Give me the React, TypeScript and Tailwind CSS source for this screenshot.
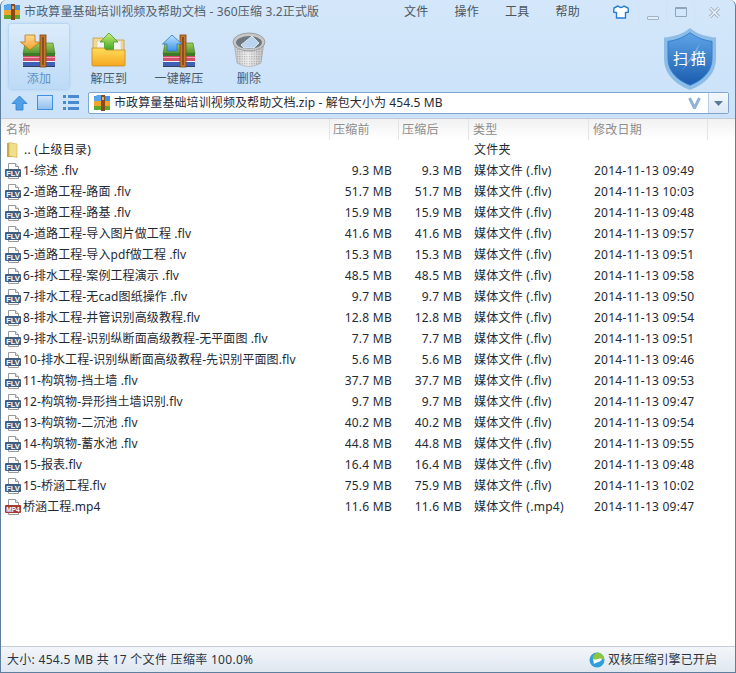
import React from "react";

const FONT = { fontFamily: '"Noto Sans","Noto Sans CJK SC",sans-serif' };

const rows: [string, string, string, string, string?][] = [
  ["1-综述 .flv", "9.3 MB", "媒体文件 (.flv)", "2014-11-13 09:49"],
  ["2-道路工程-路面 .flv", "51.7 MB", "媒体文件 (.flv)", "2014-11-13 10:03"],
  ["3-道路工程-路基 .flv", "15.9 MB", "媒体文件 (.flv)", "2014-11-13 09:48"],
  ["4-道路工程-导入图片做工程 .flv", "41.6 MB", "媒体文件 (.flv)", "2014-11-13 09:57"],
  ["5-道路工程-导入pdf做工程 .flv", "15.3 MB", "媒体文件 (.flv)", "2014-11-13 09:51"],
  ["6-排水工程-案例工程演示 .flv", "48.5 MB", "媒体文件 (.flv)", "2014-11-13 09:58"],
  ["7-排水工程-无cad图纸操作 .flv", "9.7 MB", "媒体文件 (.flv)", "2014-11-13 09:50"],
  ["8-排水工程-井管识别高级教程.flv", "12.8 MB", "媒体文件 (.flv)", "2014-11-13 09:54"],
  ["9-排水工程-识别纵断面高级教程-无平面图 .flv", "7.7 MB", "媒体文件 (.flv)", "2014-11-13 09:51"],
  ["10-排水工程-识别纵断面高级教程-先识别平面图.flv", "5.6 MB", "媒体文件 (.flv)", "2014-11-13 09:46"],
  ["11-构筑物-挡土墙 .flv", "37.7 MB", "媒体文件 (.flv)", "2014-11-13 09:53"],
  ["12-构筑物-异形挡土墙识别.flv", "9.7 MB", "媒体文件 (.flv)", "2014-11-13 09:47"],
  ["13-构筑物-二沉池 .flv", "40.2 MB", "媒体文件 (.flv)", "2014-11-13 09:54"],
  ["14-构筑物-蓄水池 .flv", "44.8 MB", "媒体文件 (.flv)", "2014-11-13 09:55"],
  ["15-报表.flv", "16.4 MB", "媒体文件 (.flv)", "2014-11-13 09:48"],
  ["15-桥涵工程.flv", "75.9 MB", "媒体文件 (.flv)", "2014-11-13 10:02"],
  ["桥涵工程.mp4", "11.6 MB", "媒体文件 (.mp4)", "2014-11-13 09:47", "mp4"],
];

function Books({ arrow, id }: { arrow: "down" | "up"; id: string }) {
  return (
    <svg width="38" height="36" viewBox="0 0 38 36" className="block">
      <defs>
        <linearGradient id={id + "g"} x1="0" y1="0" x2="0" y2="1">
          <stop offset="0" stopColor="#9ccf5c" />
          <stop offset="1" stopColor="#4f8f2c" />
        </linearGradient>
        <linearGradient id={id + "a"} x1="0" y1="0" x2="0" y2="1">
          <stop offset="0" stopColor={arrow === "down" ? "#ffd98a" : "#bfe3ff"} />
          <stop offset="1" stopColor={arrow === "down" ? "#f0a030" : "#3f95e8"} />
        </linearGradient>
      </defs>
      <path d="M5 11 H33 L35 22 H3 Z" fill={`url(#${id}g)`} stroke="#3f6f24" strokeWidth="0.6" />
      <rect x="3" y="21" width="32" height="3" fill="#3d7a28" />
      <rect x="3" y="24" width="32" height="5" fill="#d0506c" />
      <rect x="3" y="25" width="32" height="1" fill="#ee9fb0" />
      <rect x="3" y="29" width="32" height="1" fill="#f0f0f5" />
      <rect x="3" y="30" width="32" height="4" fill="#4060b8" />
      <rect x="3" y="34" width="32" height="1" fill="#33415e" />
      <rect x="20" y="3" width="6" height="32" fill="#c7772a" stroke="#7c4416" strokeWidth="0.8" />
      <rect x="22" y="5" width="2" height="28" fill="#8b4f1c" />
      {arrow === "down" ? (
        <path d="M5 3 H15 V10 H20 L10 18 L0.5 10 H5 Z" fill={`url(#${id}a)`} stroke="#b8741e" strokeWidth="0.8" />
      ) : (
        <path d="M5 18 H15 V11 H20 L10 2 L0.5 11 H5 Z" transform="translate(2 1)" fill={`url(#${id}a)`} stroke="#2f78c0" strokeWidth="0.8" />
      )}
    </svg>
  );
}

function FolderIcon() {
  return (
    <svg width="36" height="36" viewBox="0 0 36 36" className="block">
      <defs>
        <linearGradient id="fo" x1="0" y1="0" x2="0" y2="1">
          <stop offset="0" stopColor="#ffdc5c" />
          <stop offset="1" stopColor="#f5a81e" />
        </linearGradient>
        <linearGradient id="ar" x1="0" y1="0" x2="0" y2="1">
          <stop offset="0" stopColor="#cdf07a" />
          <stop offset="1" stopColor="#3ea61e" />
        </linearGradient>
      </defs>
      <path d="M2 6 H12 L14 8 H33 V20 H2 Z" fill="#f6d88a" stroke="#c79a42" strokeWidth="0.8" />
      <rect x="6" y="9" width="24" height="12" fill="#f2f2f0" stroke="#c8c8c8" strokeWidth="0.5" />
      <path d="M18 1 L27 10 H22.5 V18 H13.5 V10 H9 Z" fill="url(#ar)" stroke="#4a9a28" strokeWidth="0.8" />
      <path d="M1 16 H13 L15 18 H34 V33 Q34 34 33 34 H2 Q1 34 1 33 Z" fill="url(#fo)" stroke="#c08a26" strokeWidth="0.8" />
    </svg>
  );
}

function TrashIcon() {
  return (
    <svg width="34" height="36" viewBox="0 0 34 36" className="block">
      <defs>
        <linearGradient id="tr" x1="0" y1="0" x2="1" y2="0">
          <stop offset="0" stopColor="#9c9c9c" />
          <stop offset="0.45" stopColor="#f4f4f4" />
          <stop offset="1" stopColor="#8c8c8c" />
        </linearGradient>
        <pattern id="mesh" width="2.4" height="2.4" patternUnits="userSpaceOnUse">
          <rect width="2.4" height="2.4" fill="#f0f0f0" />
          <rect width="1.2" height="1.2" fill="#8a8a8a" />
        </pattern>
      </defs>
      <path d="M2 10 L5 31 Q17 38 29 31 L32 10 Z" fill="url(#mesh)" stroke="#a0a0a0" strokeWidth="0.6" />
      <path d="M2 10 L5 31 Q17 38 29 31 L32 10 Z" fill="url(#tr)" opacity="0.45" />
      <ellipse cx="17" cy="10" rx="16" ry="9" fill="#c8c8c8" stroke="#909090" strokeWidth="0.8" />
      <ellipse cx="17" cy="10.5" rx="13" ry="6.5" fill="#6e7a80" />
      <path d="M9 13 L20 4 L27 11 L22 16 H12 Z" fill="#b9d4ec" stroke="#eaf2fa" strokeWidth="0.8" />
    </svg>
  );
}

function ZipSmall() {
  return (
    <svg width="16" height="16" viewBox="0 0 16 16" className="block">
      <rect x="0" y="1" width="16" height="5" fill="#3f95e8" />
      <path d="M0 3 L3 0 H7 L8 2 V6 H0 Z" fill="#5aa6ee" />
      <rect x="0" y="6" width="16" height="5" fill="#f0a42a" />
      <rect x="0" y="11" width="16" height="4" fill="#5fa82e" />
      <rect x="7" y="0" width="4" height="16" fill="#8a4a1c" />
      <rect x="8" y="2" width="2" height="3" fill="#e0b060" />
    </svg>
  );
}

function FileIcon({ kind }: { kind: "flv" | "mp4" }) {
  const c = kind === "mp4" ? "#a53a30" : "#3f5f82";
  return (
    <svg width="16" height="16" viewBox="0 0 16 16" className="block">
      <path d="M3.5 0.5 H10.5 L13.5 3.5 V15.5 H3.5 Z" fill="#fff" stroke="#9a9a9a" />
      <path d="M10.5 0.5 V3.5 H13.5" fill="#e8e8e8" stroke="#9a9a9a" />
      <rect x="0" y="6" width="16" height="8" rx="1" fill={c} />
      <text
        x="8"
        y="12.7"
        textAnchor="middle"
        fontSize={kind === "mp4" ? "6.5" : "7.5"}
        fontWeight="700"
        fill="#fff"
        letterSpacing="0"
        style={{ fontFamily: '"Liberation Sans",sans-serif' }}
      >
        {kind === "mp4" ? "MP4" : "FLV"}
      </text>
    </svg>
  );
}

function ParentFolder() {
  return (
    <svg width="16" height="16" viewBox="0 0 16 16" className="block">
      <path d="M3 1 H9 V15 H3 Z" fill="#c9a93e" />
      <path d="M5 0.5 L13 2 V15.5 L5 14 Z" fill="#f2de8a" stroke="#c9ad55" strokeWidth="0.6" />
    </svg>
  );
}

function ToolButton({ label, active, children }: { label: string; active?: boolean; children: React.ReactNode }) {
  return (
    <div
      className={
        active
          ? "flex h-[65px] w-[60px] flex-col items-center rounded-[3px] bg-gradient-to-b from-[#dcecfb] to-[#bcdaf6] pt-[7px] shadow-[0_0_3px_#8fb9e0] text-[#5f93c4]"
          : "flex h-[65px] w-[60px] flex-col items-center pt-[7px] text-[#4b5a68]"
      }
    >
      <div className="flex h-[37px] items-center justify-center">{children}</div>
      <span className="mt-[3px] whitespace-nowrap text-[12px] leading-[16px]">{label}</span>
    </div>
  );
}

function Shield() {
  return (
    <svg width="54" height="63" viewBox="0 0 54 66" preserveAspectRatio="none" className="block">
      <defs>
        <linearGradient id="sh" x1="0" y1="0" x2="0" y2="1">
          <stop offset="0" stopColor="#5fa4e6" />
          <stop offset="1" stopColor="#1a5cae" />
        </linearGradient>
      </defs>
      <path d="M27 0 C35 7 44 9 53 10 V32 C53 48 42 59 27 65 C12 59 1 48 1 32 V10 C10 9 19 7 27 0 Z" fill="#8dbde6" />
      <path d="M27 5 C35 11 42 13 49 14 V32 C49 46 39 55 27 60 C15 55 5 46 5 32 V14 C12 13 19 11 27 5 Z" fill="url(#sh)" stroke="#2f7fd0" strokeWidth="1" />
      <path d="M37 16 L18 46 L27 34 L31 33 Z" fill="#8fc0ee" opacity="0.7" />
    </svg>
  );
}

export default function App() {
  return (
    <div
      style={FONT}
      className="relative flex h-[673px] w-[736px] flex-col overflow-hidden rounded-t-[6px] border-x border-b border-x-[#5f7f9f] border-b-[#5f7f9f] bg-gradient-to-b from-[#d4e7fa] via-[#b9d8f7] to-[#a6cdf3] text-[12px] tracking-[0.25px]"
    >
      {/* title bar */}
      <div className="flex h-[24px] shrink-0 items-center pl-[3px]">
        <ZipSmall />
        <span className="ml-[4px] whitespace-nowrap text-[12px] leading-[16px] tracking-[0.15px] text-[#53606c]">
          市政算量基础培训视频及帮助文档 - 360压缩 3.2正式版
        </span>
        <div className="ml-auto flex items-center self-start text-[#4a5560]">
          <div className="flex h-[24px] items-center gap-[26px]">
            <span>文件</span>
            <span>操作</span>
            <span>工具</span>
            <span>帮助</span>
          </div>
          <svg width="16" height="14" viewBox="0 0 16 14" className="ml-[33px]">
            <path d="M5 1 L1 3 L0.5 7 L3.5 7.5 V13 H12.5 V7.5 L15.5 7 L15 3 L11 1 Q8 4 5 1 Z" fill="#fff" stroke="#1f7fd8" strokeWidth="1.4" />
          </svg>
          <div className="ml-[9px] flex h-[21px] w-[29px] items-end justify-center border-x border-[#cfe2f5] pb-[3px]">
            <div className="h-[4px] w-[12px] rounded-[1px] border border-[#9fb3c6] bg-[#e4eef8]" />
          </div>
          <div className="flex h-[21px] w-[28px] items-center justify-center border-r border-[#cfe2f5]">
            <div className="h-[10px] w-[12px] rounded-[1px] border border-[#8fa5ba] border-t-[2px]" />
          </div>
          <div className="flex h-[21px] w-[40px] items-center justify-center pr-[1px]">
            <svg width="13" height="13" viewBox="0 0 13 13">
              <path d="M2 2 L11 11 M11 2 L2 11" stroke="#a4b5c5" strokeWidth="3.4" />
              <path d="M2 2 L11 11 M11 2 L2 11" stroke="#eef4fa" strokeWidth="1.4" />
            </svg>
          </div>
        </div>
      </div>

      {/* toolbar */}
      <div className="flex h-[68px] shrink-0 items-start gap-[10px] pl-[8px]">
        <ToolButton label="添加" active>
          <Books arrow="down" id="b1" />
        </ToolButton>
        <ToolButton label="解压到">
          <FolderIcon />
        </ToolButton>
        <ToolButton label="一键解压">
          <Books arrow="up" id="b2" />
        </ToolButton>
        <ToolButton label="删除">
          <TrashIcon />
        </ToolButton>
      </div>

      {/* shield */}
      <div className="absolute left-[662px] top-[28px]">
        <Shield />
        <span className="absolute left-[10px] top-[20px] whitespace-nowrap text-[15px] leading-[20px] tracking-[3px] text-white">
          扫描
        </span>
      </div>

      {/* address row */}
      <div className="flex h-[26px] shrink-0 items-start pl-[10px]">
        <svg width="17" height="16" viewBox="0 0 17 16" className="mt-[3px]">
          <path d="M8.5 1 L16 8.5 H12 V15 H5 V8.5 H1 Z" fill="#4f9fe8" stroke="#2f7fcc" strokeWidth="0.8" />
        </svg>
        <div className="ml-[9px] mt-[3px] h-[15px] w-[16px] border-[1.5px] border-[#3f8fe0] bg-gradient-to-b from-[#d2e6fa] to-[#8fbfee] p-[1px]" />
        <div className="ml-[10px] mt-[3px] flex w-[16px] flex-col gap-[3px]">
          {[0, 1, 2].map((i) => (
            <div key={i} className="flex gap-[2px]">
              <div className="h-[3px] w-[3px] bg-[#4a8ad0]" />
              <div className="h-[3px] w-[11px] bg-[#4a8ad0]" />
            </div>
          ))}
        </div>
        <div className="relative z-0 ml-[9px] flex h-[22px] w-[641px] items-center rounded-[2px] border border-[#7fa6cf] bg-white pl-[5px]">
          <ZipSmall />
          <span className="ml-[4px] whitespace-nowrap tracking-[0.1px] text-[#1f2a35]">市政算量基础培训视频及帮助文档.zip - 解包大小为 454.5 MB</span>
          <svg width="13" height="12" viewBox="0 0 13 12" className="ml-auto mr-[7px]">
            <path d="M1.5 1 L6.5 11 L11.5 1" fill="none" stroke="#8fb4d8" strokeWidth="3" />
          </svg>
          <div className="flex h-[20px] w-[20px] items-center justify-center border-l border-[#b8cfe6] bg-gradient-to-b from-[#f4f8fc] to-[#dbe8f5]">
            <svg width="9" height="5" viewBox="0 0 9 5">
              <path d="M0 0 H9 L4.5 5 Z" fill="#5a7a9a" />
            </svg>
          </div>
        </div>
      </div>

      {/* list */}
      <div className="flex min-h-0 flex-1 flex-col bg-white">
        <div className="grid h-[21px] shrink-0 grid-cols-[328px_69px_70px_120px_120px] items-center border-t border-[#c5cbd2] bg-gradient-to-b from-[#f1f1f1] to-white text-[#8d8d8d]">
          <span className="pl-[5px]">名称</span>
          <span className="h-full border-l border-[#e4e4e4] pl-[3px] leading-[21px]">压缩前</span>
          <span className="h-full border-l border-[#e4e4e4] pl-[3px] leading-[21px]">压缩后</span>
          <span className="h-full border-l border-[#e4e4e4] pl-[4px] leading-[21px]">类型</span>
          <span className="h-full border-r border-l border-[#e4e4e4] pl-[4px] leading-[21px]">修改日期</span>
        </div>
        <div className="grid h-[21px] grid-cols-[328px_69px_70px_120px_120px] items-center text-[#1f2a35]">
          <span className="flex items-center gap-[4px] pl-[3px]">
            <ParentFolder />
            .. (上级目录)
          </span>
          <span />
          <span />
          <span className="pl-[6px]">文件夹</span>
          <span />
        </div>
        {rows.map((r) => (
          <div key={r[0]} className="grid h-[21px] grid-cols-[328px_69px_70px_120px_120px] items-center whitespace-nowrap text-[#1f2a35]">
            <span className="flex items-center gap-[2px] pl-[4px] tracking-[0.1px]">
              <FileIcon kind={r[4] === "mp4" ? "mp4" : "flv"} />
              {r[0]}
            </span>
            <span className="pr-[6px] text-right">{r[1]}</span>
            <span className="pr-[6px] text-right">{r[1]}</span>
            <span className="pl-[6px]">{r[2]}</span>
            <span className="pl-[6px]">{r[3]}</span>
          </div>
        ))}
      </div>

      {/* status */}
      <div className="flex h-[26px] shrink-0 items-center border-t border-[#c5ccd4] bg-gradient-to-b from-[#f3f6fa] to-[#dfe7f0] pl-[6px] pr-[18px] tracking-[0.3px] text-[#2a3440]">
        <span>大小: 454.5 MB 共 17 个文件 压缩率 100.0%</span>
        <svg width="16" height="16" viewBox="0 0 16 16" className="ml-auto mr-[1px]">
          <circle cx="8" cy="8" r="7.5" fill="#2f9fdc" />
          <path d="M8 0.5 A7.5 7.5 0 0 1 15.5 8 C12 5 9 10 4 7 C3 5 5 2 8 0.5 Z" fill="#8cc63f" />
          <path d="M4 7 C7 9 10 5 13 7 C12 10 8 10 5 12 Z" fill="#fff" />
        </svg>
        <span className="ml-[2px] tracking-[0.1px]">双核压缩引擎已开启</span>
      </div>
    </div>
  );
}
